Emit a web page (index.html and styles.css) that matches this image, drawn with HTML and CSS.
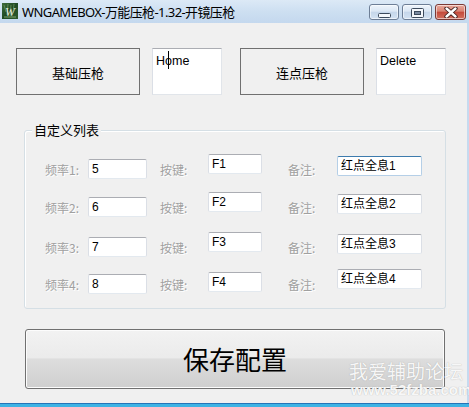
FILE: index.html
```html
<!DOCTYPE html>
<html lang="zh-CN">
<head>
<meta charset="utf-8">
<title>WNGAMEBOX</title>
<link rel="stylesheet" href="styles.css">
</head>
<body>
<div class="window">
  <div class="titlebar">
    <svg class="app-icon" width="16" height="16" viewBox="0 0 16 16">
      <defs>
        <linearGradient id="ig" x1="0" y1="0" x2="1" y2="1">
          <stop offset="0" stop-color="#3f6b3a"/>
          <stop offset="0.5" stop-color="#1f4a24"/>
          <stop offset="1" stop-color="#2e5a2c"/>
        </linearGradient>
      </defs>
      <rect x="0" y="0" width="16" height="16" fill="url(#ig)"/>
      <path d="M2 2 L4 9 M6 1 L5 12 M9 2 L8 13 M12 1 L11 10" stroke="#7fa86a" stroke-width="1" opacity="0.6"/>
      <text x="8" y="12.5" text-anchor="middle" font-family="Liberation Serif, serif" font-style="italic" font-size="12" fill="#e8f0e0">W</text>
      <rect x="2" y="13.5" width="12" height="1" fill="#a8c890" opacity="0.7"/>
    </svg>
    <span class="title">WNGAMEBOX-万能压枪-1.32-开镜压枪</span>
    <div class="caption-btns">
      <div class="cbtn cbtn-min">
        <svg width="13" height="5" viewBox="0 0 13 5"><rect x="0.5" y="0.5" width="12" height="4" rx="1" fill="#f4f7fb" stroke="#3c4a5c"/></svg>
      </div>
      <div class="cbtn cbtn-max">
        <svg width="13" height="10" viewBox="0 0 13 10"><rect x="0.5" y="0.5" width="12" height="9" rx="1" fill="#f4f7fb" stroke="#3c4a5c"/><rect x="3.5" y="3.5" width="6" height="3" fill="#7a8aa0" stroke="#3c4a5c"/></svg>
      </div>
      <div class="cbtn cbtn-close">
        <svg width="14" height="11" viewBox="0 0 14 11"><path d="M2.5 1.5 L11.5 9.5 M11.5 1.5 L2.5 9.5" stroke="#3a1a18" stroke-width="4.2" stroke-linecap="round"/><path d="M2.5 1.5 L11.5 9.5 M11.5 1.5 L2.5 9.5" stroke="#ffffff" stroke-width="2.4" stroke-linecap="round"/></svg>
      </div>
    </div>
  </div>
  <div class="frame-body">
    <div class="client">
      <div class="top-row">
        <div class="btn">基础压枪</div>
        <div class="hotkey">Home<span class="caret"></span></div>
        <div class="btn btn-second">连点压枪</div>
        <div class="hotkey">Delete</div>
      </div>

      <div class="group">
        <span class="legend">自定义列表</span>
        <div class="grid">
          <span class="lbl">频率1:</span>
          <div class="tb tb-freq">5</div>
          <span class="lbl lbl-key">按键:</span>
          <div class="tb tb-key">F1</div>
          <span class="lbl lbl-note">备注:</span>
          <div class="tb tb-note tb-focus">红点全息1</div>

          <span class="lbl">频率2:</span>
          <div class="tb tb-freq">6</div>
          <span class="lbl lbl-key">按键:</span>
          <div class="tb tb-key">F2</div>
          <span class="lbl lbl-note">备注:</span>
          <div class="tb tb-note">红点全息2</div>

          <span class="lbl">频率3:</span>
          <div class="tb tb-freq">7</div>
          <span class="lbl lbl-key">按键:</span>
          <div class="tb tb-key">F3</div>
          <span class="lbl lbl-note">备注:</span>
          <div class="tb tb-note">红点全息3</div>

          <span class="lbl">频率4:</span>
          <div class="tb tb-freq">8</div>
          <span class="lbl lbl-key">按键:</span>
          <div class="tb tb-key tb-key-last">F4</div>
          <span class="lbl lbl-note">备注:</span>
          <div class="tb tb-note tb-note-last">红点全息4</div>
        </div>
      </div>

      <div class="save-btn">保存配置</div>

      <div class="watermark">
        <div class="wm-cn">我爱辅助论坛</div>
        <div class="wm-url">www.52fzba.com</div>
      </div>
    </div>
    <div class="frame-right"></div>
  </div>
  <div class="frame-bottom"></div>
</div>
</body>
</html>
```

FILE: styles.css
```css
* { box-sizing: border-box; }

html, body {
  margin: 0;
  padding: 0;
  background: #f0f0f0;
}

.window {
  width: 469px;
  height: 407px;
  display: flex;
  flex-direction: column;
  overflow: hidden;
  font-family: "Liberation Sans", "Noto Sans CJK SC", sans-serif;
}

/* ---------- title bar ---------- */
.titlebar {
  height: 23px;
  flex: none;
  display: flex;
  align-items: flex-start;
  background: linear-gradient(#dce9f6 0%, #cddff1 50%, #c4d8ee 100%);
  position: relative;
}

.app-icon {
  margin: 3px 0 0 2px;
  flex: none;
}

.title {
  margin: 3px 0 0 4px;
  font-family: "Noto Sans", "Noto Sans CJK SC", sans-serif;
  font-size: 13px;
  line-height: 18px;
  color: #000;
  white-space: nowrap;
  letter-spacing: -0.6px;
}

.caption-btns {
  margin-left: auto;
  margin-right: 3px;
  margin-top: 4px;
  display: flex;
  gap: 3px;
}

.cbtn {
  width: 30px;
  height: 16px;
  border: 1px solid #6d7e96;
  border-radius: 3px;
  display: flex;
  align-items: center;
  justify-content: center;
  background: linear-gradient(#eef4fb 0%, #dbe7f4 45%, #c5d6ea 50%, #d3e2f2 100%);
  box-shadow: inset 0 0 0 1px rgba(255,255,255,0.55);
}

.cbtn-min svg { margin-top: 6px; }
.cbtn-max svg { margin-top: 1px; }

.cbtn-close {
  width: 31px;
  border-color: #7a3a36;
  background: linear-gradient(#e9a99d 0%, #d88272 45%, #c4493a 50%, #d2705f 100%);
}

/* ---------- frame ---------- */
.frame-body {
  flex: 1;
  display: flex;
  min-height: 0;
}

.client {
  flex: 1;
  background: #f0f0f0;
  position: relative;
  display: flex;
  flex-direction: column;
}

.frame-right {
  width: 2px;
  background: #c6daef;
}

.frame-bottom {
  height: 4px;
  flex: none;
  background: #3db3e4;
  border-top: 1px solid #2574b8;
}

/* ---------- top row ---------- */
.top-row {
  display: flex;
  margin: 25px 0 0 16px;
  height: 47px;
}

.btn {
  width: 124px;
  height: 47px;
  border: 1px solid #707070;
  background: #f0f0f0;
  display: flex;
  align-items: center;
  justify-content: center;
  font-family: "Noto Sans CJK SC", sans-serif;
  font-size: 13px;
  color: #000;
  padding-top: 2px;
}

.btn-second { margin-left: 18px; }

.hotkey {
  position: relative;
  width: 70px;
  height: 47px;
  margin-left: 12px;
  background: #fff;
  border: 1px solid #e1e5ea;
  border-top-color: #abadb3;
  border-left-color: #dbdfe6;
  padding: 5px 0 0 3px;
  font-family: "Liberation Sans", sans-serif;
  font-size: 12.5px;
  line-height: 15px;
  color: #000;
}

.caret {
  position: absolute;
  left: 15px;
  top: 2px;
  width: 1px;
  height: 18px;
  background: #000;
}

/* ---------- group box ---------- */
.group {
  position: relative;
  margin: 35px 0 0 24px;
  width: 422px;
  height: 179px;
  border: 1px solid #d5dfe5;
  border-radius: 3px;
  box-shadow: inset 1px 1px 0 #fff;
  padding: 23px 0 0 20px;
}

.legend {
  position: absolute;
  left: 7px;
  top: -10px;
  padding: 0 2px;
  background: #f0f0f0;
  font-family: "Noto Sans CJK SC", sans-serif;
  font-size: 13px;
  line-height: 18px;
  color: #000;
}

.grid {
  display: grid;
  grid-template-columns: 43px 59px 61px 54px 75px 85px;
  grid-template-rows: 38px 40px 37px 20px;
  align-items: start;
}

.lbl {
  margin-top: 8px;
  font-family: "Noto Sans CJK SC", sans-serif;
  font-size: 12px;
  line-height: 16px;
  color: #a0a0a0;
  text-shadow: 1px 1px 0 #ffffff;
  white-space: nowrap;
}

.lbl-key { padding-left: 13px; }
.lbl-note { padding-left: 26px; }

.tb {
  height: 20px;
  background: #fff;
  border: 1px solid #e3e9ef;
  border-top-color: #abadb3;
  border-left-color: #dbdfe6;
  border-right-color: #dbdfe6;
  border-radius: 2px;
  padding: 0 0 0 3px;
  font-family: "Liberation Sans", "Noto Sans CJK SC", sans-serif;
  font-size: 12px;
  line-height: 18px;
  color: #000;
  white-space: nowrap;
}

.tb-freq { margin-top: 5px; }
.tb-key { margin-top: 0; }
.tb-note { margin-top: 2px; }
.tb-key-last { margin-top: 3px; }
.tb-note-last { margin-top: 0; }

.tb-focus {
  border-color: #b5cfe7;
  border-top-color: #3d7bad;
}

/* ---------- save button ---------- */
.save-btn {
  margin: 20px 0 0 25px;
  width: 420px;
  height: 60px;
  border: 1px solid #707070;
  border-radius: 3px;
  background: linear-gradient(#f2f2f2 0%, #ebebeb 48%, #dddddd 50%, #cfcfcf 100%);
  box-shadow: inset 0 0 0 1px #fcfcfc;
  display: flex;
  align-items: center;
  justify-content: center;
  font-family: "Noto Sans CJK SC", sans-serif;
  font-size: 26px;
  color: #000;
  padding-bottom: 2px;
}

/* ---------- watermark ---------- */
.watermark {
  position: absolute;
  left: 349px;
  top: 336px;
  color: rgba(255, 255, 255, 0.92);
  text-shadow: 0 0 1px rgba(150,150,150,0.8);
}

.wm-cn {
  font-family: "Noto Sans CJK SC", sans-serif;
  font-size: 19px;
  line-height: 23px;
}

.wm-url {
  font-family: "Liberation Sans", sans-serif;
  font-weight: bold;
  font-size: 15px;
  line-height: 15px;
  padding-left: 2px;
}
```
